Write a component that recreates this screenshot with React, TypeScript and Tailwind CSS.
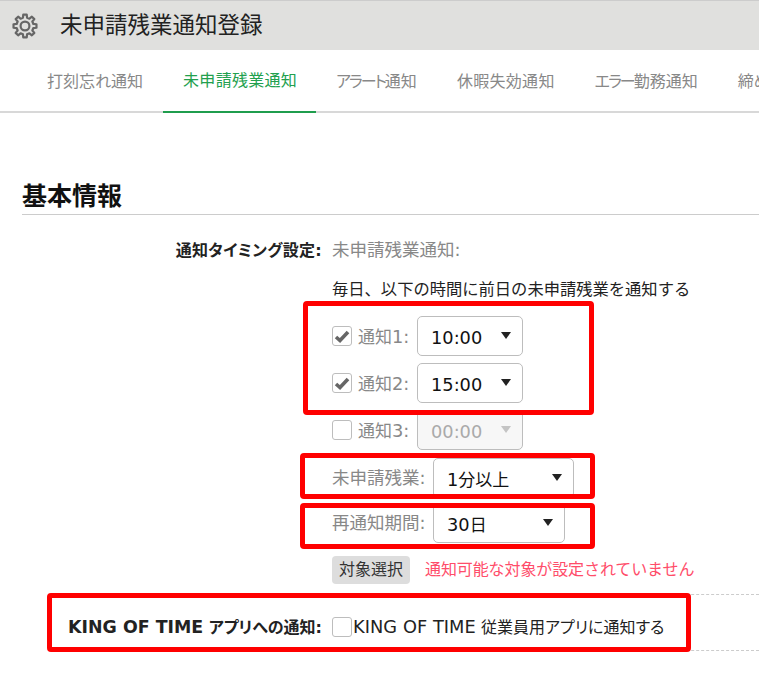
import React from 'react';

// 8-tooth gear outline, points worked out around the centre
const gearPath = (() => {
  const pts: string[] = [];
  for (let i = 0; i < 8; i++) {
    const a = (i * Math.PI) / 4 - Math.PI / 2;
    const p = (r: number, off: number) => {
      const x = 13 + r * Math.cos(a + off);
      const y = 13 + r * Math.sin(a + off);
      return `${x.toFixed(2)} ${y.toFixed(2)}`;
    };
    pts.push(p(8.6, -0.24), p(11.6, -0.15), p(11.6, 0.15), p(8.6, 0.24));
  }
  return `M${pts.join('L')}Z`;
})();

const Gear = () => (
  <svg width="26" height="26" viewBox="0 0 26 26" fill="none" stroke="#666666" strokeWidth="2.2" strokeLinejoin="round">
    <path d={gearPath} />
    <circle cx="13" cy="13" r="4.4" />
  </svg>
);

const Caret = ({ disabled }: { disabled?: boolean }) => (
  <svg width="10" height="7" viewBox="0 0 10 7" className="absolute right-[11px] top-[15px]">
    <path d="M0 0H10L5 7Z" fill={disabled ? '#c4c4c4' : '#222222'} />
  </svg>
);

// Latin runs sit larger than the CJK text next to them
const Lat = ({ children }: { children: React.ReactNode }) => <span className="text-[17.8px]">{children}</span>;

const Select = ({ value, width, disabled }: { value: React.ReactNode; width: string; disabled?: boolean }) => (
  <div
    className={`relative flex h-[40px] items-center rounded-[5px] border border-[#bdbdbd] pl-[13px] text-[17px] ${width} ${
      disabled ? 'bg-[#f7f7f7] text-[#aaaaaa]' : 'bg-white text-[#111111]'
    }`}
  >
    <span className="pt-[4px]">{value}</span>
    <Caret disabled={disabled} />
  </div>
);

const Checkbox = ({ checked }: { checked?: boolean }) => (
  <div className="flex h-[20px] w-[20px] shrink-0 items-center justify-center rounded-[3px] border border-[#bdbdbd] bg-white">
    {checked && (
      <svg width="16" height="14" viewBox="0 0 16 14">
        <path d="M2 8 L6 11.5 L14 3" fill="none" stroke="#666666" strokeWidth="3.6" />
      </svg>
    )}
  </div>
);

const Row = ({ label, children, className }: { label?: string; children: React.ReactNode; className?: string }) => (
  <div className={`flex items-center ${className ?? ''}`}>
    <div className="w-[322px] shrink-0 pt-px text-right font-bold tracking-[0.3px] text-[#222222] [font-feature-settings:'palt']">{label}</div>
    <div className="ml-[10px] flex items-center pt-px">{children}</div>
  </div>
);

const TimeRow = ({ n, value, checked, disabled }: { n: number; value: string; checked?: boolean; disabled?: boolean }) => (
  <div className="flex items-center pl-[332px]">
    <Checkbox checked={checked} />
    <span className="ml-[6px] w-[59px] whitespace-nowrap pt-[3px] text-[17px] text-[#888888]">
      通知<Lat>{n}:</Lat>
    </span>
    <Select value={<Lat>{value}</Lat>} width="w-[106px]" disabled={disabled} />
  </div>
);

const RedBox = ({ className }: { className: string }) => (
  <div className={`pointer-events-none absolute rounded-[4px] border-[5px] border-[#ff0000] ${className}`} />
);

export default function App() {
  return (
    <div className="relative h-[674px] w-[759px] overflow-hidden bg-white text-[16px] [font-family:'DejaVu_Sans','Noto_Sans_CJK_JP',sans-serif]">
      {/* header */}
      <div className="flex h-[50px] items-center border-t border-[#cccccc] bg-[#e0e0de] pl-[12px]">
        <Gear />
        <h1 className="ml-[22px] text-[22.5px] text-[#222222]">未申請残業通知登録</h1>
      </div>

      {/* tabs */}
      <div className="flex h-[63px] whitespace-nowrap border-b-2 border-[#d8d8d8] pl-[27px]">
        <div className="-mb-[2px] flex h-[63px] items-center px-[20px] text-[#888888] [font-feature-settings:'palt']">打刻忘れ通知</div>
        <div className="-mb-[2px] flex h-[63px] w-[153px] items-center border-b-2 border-[#1f9d4d] px-[20px] tracking-[0.3px] text-[#22a04e]">未申請残業通知</div>
        <div className="-mb-[2px] flex h-[63px] items-center px-[20px] text-[#888888] [font-feature-settings:'palt']">
          <span className="tracking-[-2px]">アラート</span>通知
        </div>
        <div className="-mb-[2px] flex h-[63px] items-center px-[20px] tracking-[0.3px] text-[#888888]">休暇失効通知</div>
        <div className="-mb-[2px] flex h-[63px] items-center px-[20px] text-[#888888] [font-feature-settings:'palt']">
          <span className="tracking-[-2px]">エラー</span>勤務通知
        </div>
        <div className="-mb-[2px] flex h-[63px] items-center px-[20px] text-[#888888]">締め日通知</div>
      </div>

      {/* section */}
      <h2 className="ml-[22px] mt-[65px] h-[37px] border-b border-[#cccccc] text-[25px] font-bold leading-[38px] text-[#111111]">基本情報</h2>

      <Row label="通知タイミング設定:" className="mt-[22px] h-[26px]">
        <span className="text-[17.5px] text-[#888888]">
          未申請残業通知<Lat>:</Lat>
        </span>
      </Row>
      <Row className="mt-[14px] h-[26px]">
        <span className="whitespace-nowrap text-[16.3px] text-[#222222]">毎日、以下の時間に前日の未申請残業を通知する</span>
      </Row>

      <div className="mt-[13px] flex flex-col gap-[7px]">
        <TimeRow n={1} value="10:00" checked />
        <TimeRow n={2} value="15:00" checked />
        <TimeRow n={3} value="00:00" disabled />
      </div>

      <div className="mt-[8px] flex items-center pl-[332px]">
        <span className="w-[101px] whitespace-nowrap text-[17.5px] text-[#888888]">
          未申請残業<Lat>:</Lat>
        </span>
        <Select value={<><Lat>1</Lat>分以上</>} width="w-[141px]" />
      </div>
      <div className="mt-[5px] flex items-center pl-[332px]">
        <span className="w-[101px] whitespace-nowrap text-[17.5px] text-[#888888]">
          再通知期間<Lat>:</Lat>
        </span>
        <Select value={<><Lat>30</Lat>日</>} width="w-[132px]" />
      </div>

      <div className="mt-[13px] flex items-center pl-[332px]">
        <button className="h-[28px] w-[78px] rounded-[4px] bg-[#dddddd] text-[#333333]">対象選択</button>
        <span className="ml-[15px] whitespace-nowrap tracking-[-0.1px] text-[#ff4d6a]">通知可能な対象が設定されていません</span>
      </div>

      <div className="ml-[48px] mt-[10px] flex h-[57px] items-center border-y border-dashed border-[#cccccc] pt-[9px]">
        <div className="w-[274px] shrink-0 whitespace-nowrap text-right font-bold text-[#222222] [font-feature-settings:'palt']">
          <span className="text-[17.4px]">KING OF TIME</span> アプリへの通知:
        </div>
        <div className="ml-[10px] flex items-center whitespace-nowrap text-[#222222]">
          <Checkbox />
          <span className="ml-px tracking-[0.05px] [font-feature-settings:'palt']">
            <Lat>KING OF TIME</Lat> 従業員用アプリに通知する
          </span>
        </div>
      </div>

      <RedBox className="left-[303px] top-[301px] h-[114px] w-[291px]" />
      <RedBox className="left-[300px] top-[453px] h-[46px] w-[295px]" />
      <RedBox className="left-[300px] top-[503px] h-[46px] w-[295px]" />
      <RedBox className="left-[47px] top-[593px] h-[59px] w-[644px]" />
    </div>
  );
}
